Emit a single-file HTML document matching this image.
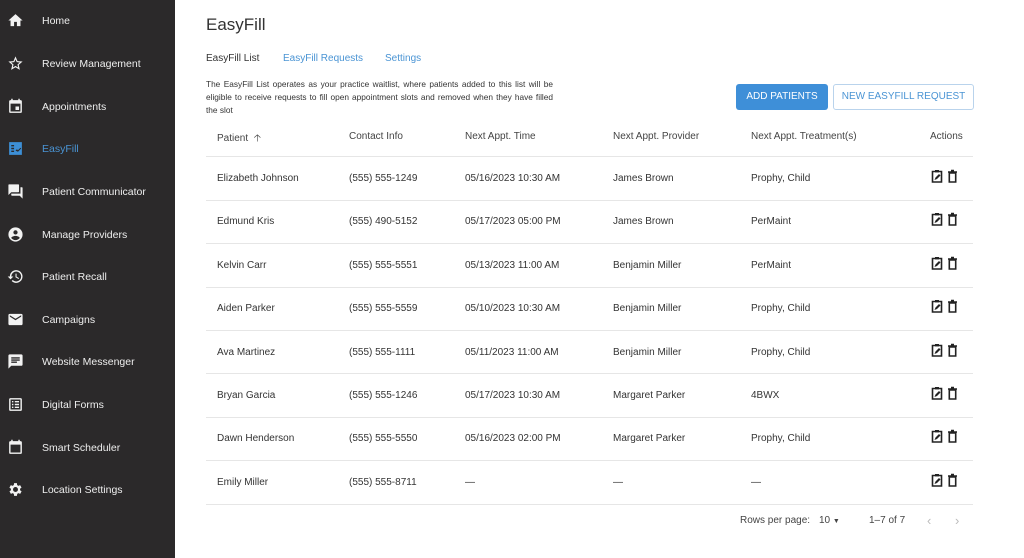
<!DOCTYPE html>
<html><head><style>
*{margin:0;padding:0;box-sizing:border-box}
body{width:1024px;height:558px;background:#fff;font-family:"Liberation Sans",sans-serif;position:relative;overflow:hidden;color:#333}
.sb{position:absolute;left:0;top:0;width:175px;height:558px;background:#2b292a}
.it{position:absolute;left:0;height:20px;width:175px;font-size:10.5px;color:#eee}
.it span{position:absolute;left:42px;top:5px}
.it svg{position:absolute;left:7px;top:2px;width:17px;height:17px;fill:#f2f2f2}
.a{position:absolute;white-space:nowrap}
.hd{font-size:10px;color:#444}
.c{font-size:10px;color:#333}
.ln{position:absolute;left:206px;width:767px;height:1px;background:#e6e6e6}
.ic{position:absolute;left:931px;width:30px;height:14px}
</style></head><body>
<div class="sb">
<div class="it" style="top:10px"><svg viewBox="0 0 24 24"><path d="M10 20v-6h4v6h5v-8h3L12 3 2 12h3v8z"/></svg><span>Home</span></div>
<div class="it" style="top:53px"><svg viewBox="0 0 24 24"><path d="M22 9.24l-7.19-.62L12 2 9.19 8.63 2 9.24l5.46 4.73L5.82 21 12 17.27 18.18 21l-1.63-7.03L22 9.24zM12 15.4l-3.76 2.27 1-4.28-3.32-2.88 4.38-.38L12 6.1l1.71 4.04 4.38.38-3.32 2.88 1 4.28L12 15.4z"/></svg><span>Review Management</span></div>
<div class="it" style="top:96px"><svg viewBox="0 0 24 24"><path d="M17 12h-5v5h5v-5zM16 1v2H8V1H6v2H5a2 2 0 00-2 2v14a2 2 0 002 2h14a2 2 0 002-2V5a2 2 0 00-2-2h-1V1h-2zm3 18H5V8h14v11z"/></svg><span>Appointments</span></div>
<div class="it" style="top:138px"><svg viewBox="0 0 24 24" style="fill:#3d8fd6"><path d="M3 3h18v18H3z"/><path fill="#2b292a" d="M6 7h4v2H6zm0 4h4v2H6zm0 4h4v2H6zm6 0l2-2 1.5 1.5L19 11l1 1-4.5 4.5z"/></svg><span style="color:#4a94d4">EasyFill</span></div>
<div class="it" style="top:181px"><svg viewBox="0 0 24 24"><path d="M21 6h-2v9H6v2c0 .55.45 1 1 1h11l4 4V7c0-.55-.45-1-1-1zm-4 6V3c0-.55-.45-1-1-1H3c-.55 0-1 .45-1 1v14l4-4h10c.55 0 1-.45 1-1z"/></svg><span>Patient Communicator</span></div>
<div class="it" style="top:224px"><svg viewBox="0 0 24 24"><path d="M12 2a10 10 0 100 20 10 10 0 000-20zm0 4a3 3 0 110 6 3 3 0 010-6zm0 14a8 8 0 01-6-3c.03-2 4-3.1 6-3.1s5.970 1.1 6 3.1a8 8 0 01-6 3z"/></svg><span>Manage Providers</span></div>
<div class="it" style="top:266px"><svg viewBox="0 0 24 24"><path d="M13 3a9 9 0 00-9 9H1l4 4 4-4H6a7 7 0 117 7 7 7 0 01-5-2l-1.4 1.4A9 9 0 1013 3zm-1 5v5l4.3 2.5.7-1.2-3.5-2.1V8z"/></svg><span>Patient Recall</span></div>
<div class="it" style="top:309px"><svg viewBox="0 0 24 24"><path d="M20 4H4a2 2 0 00-2 2v12a2 2 0 002 2h16a2 2 0 002-2V6a2 2 0 00-2-2zm0 4l-8 5-8-5V6l8 5 8-5v2z"/></svg><span>Campaigns</span></div>
<div class="it" style="top:351px"><svg viewBox="0 0 24 24"><path d="M20 2H4a2 2 0 00-2 2v18l4-4h14a2 2 0 002-2V4a2 2 0 00-2-2zM6 9h12v2H6zm8 5H6v-2h8zm4-6H6V6h12z"/></svg><span>Website Messenger</span></div>
<div class="it" style="top:394px"><svg viewBox="0 0 24 24"><path d="M19 3H5a2 2 0 00-2 2v14a2 2 0 002 2h14a2 2 0 002-2V5a2 2 0 00-2-2zm0 16H5V5h14zM7 7h2v2H7zm0 4h2v2H7zm0 4h2v2H7zm4-8h6v2h-6zm0 4h6v2h-6zm0 4h6v2h-6z"/></svg><span>Digital Forms</span></div>
<div class="it" style="top:437px"><svg viewBox="0 0 24 24"><path d="M19 3h-1V1h-2v2H8V1H6v2H5a2 2 0 00-2 2v14a2 2 0 002 2h14a2 2 0 002-2V5a2 2 0 00-2-2zm0 16H5V8h14z"/></svg><span>Smart Scheduler</span></div>
<div class="it" style="top:479px"><svg viewBox="0 0 24 24"><path d="M19.4 13a7.5 7.5 0 000-2l2.1-1.6-2-3.5-2.5 1a7 7 0 00-1.7-1L15 3h-4l-.4 2.9a7 7 0 00-1.7 1l-2.5-1-2 3.5L6.6 11a7.5 7.5 0 000 2l-2.1 1.6 2 3.5 2.5-1a7 7 0 001.7 1L11 21h4l.4-2.9a7 7 0 001.7-1l2.5 1 2-3.5zM13 15.5a3.5 3.5 0 110-7 3.5 3.5 0 010 7z" transform="translate(-1 0)"/></svg><span>Location Settings</span></div>
</div>

<div class="a" style="left:206px;top:15px;font-size:17px;color:#333">EasyFill</div>
<div class="a" style="left:206px;top:53px;font-size:10px;color:#333">EasyFill List</div>
<div class="a" style="left:283px;top:53px;font-size:10px;color:#4a94d4">EasyFill Requests</div>
<div class="a" style="left:385px;top:53px;font-size:10px;color:#4a94d4">Settings</div>
<div class="a" style="left:206px;top:78px;font-size:8.3px;color:#333;line-height:13px;width:347px;white-space:normal;text-align:justify">The EasyFill List operates as your practice waitlist, where patients added to this list will be eligible to receive requests to fill open appointment slots and removed when they have filled the slot</div>
<div class="a" style="left:736px;top:84px;width:92px;height:26px;background:#3e8fd8;border-radius:3px;color:#fff;font-size:10px;text-align:center;line-height:26px">ADD PATIENTS</div>
<div class="a" style="left:833px;top:84px;width:141px;height:26px;border:1px solid #b9d3ec;border-radius:3px;color:#4a94d4;font-size:10px;text-align:center;line-height:24px">NEW EASYFILL REQUEST</div>

<div class="a hd" style="left:217px;top:131px">Patient &nbsp;🡡</div>
<div class="a hd" style="left:349px;top:131px">Contact Info</div>
<div class="a hd" style="left:465px;top:131px">Next Appt. Time</div>
<div class="a hd" style="left:613px;top:131px">Next Appt. Provider</div>
<div class="a hd" style="left:751px;top:131px">Next Appt. Treatment(s)</div>
<div class="a hd" style="left:930px;top:131px">Actions</div>

<div class="ln" style="top:156px"></div>
<div class="ln" style="top:200px"></div>
<div class="ln" style="top:243px"></div>
<div class="ln" style="top:287px"></div>
<div class="ln" style="top:330px"></div>
<div class="ln" style="top:373px"></div>
<div class="ln" style="top:417px"></div>
<div class="ln" style="top:460px"></div>
<div class="ln" style="top:504px"></div>

<div id="rows"></div>
<script>
var d=[["Elizabeth Johnson","(555) 555-1249","05/16/2023 10:30 AM","James Brown","Prophy, Child"],
["Edmund Kris","(555) 490-5152","05/17/2023 05:00 PM","James Brown","PerMaint"],
["Kelvin Carr","(555) 555-5551","05/13/2023 11:00 AM","Benjamin Miller","PerMaint"],
["Aiden Parker","(555) 555-5559","05/10/2023 10:30 AM","Benjamin Miller","Prophy, Child"],
["Ava Martinez","(555) 555-1111","05/11/2023 11:00 AM","Benjamin Miller","Prophy, Child"],
["Bryan Garcia","(555) 555-1246","05/17/2023 10:30 AM","Margaret Parker","4BWX"],
["Dawn Henderson","(555) 555-5550","05/16/2023 02:00 PM","Margaret Parker","Prophy, Child"],
["Emily Miller","(555) 555-8711","—","—","—"]];
var xs=[217,349,465,613,751],h="";
var ic='<svg width="30" height="14" viewBox="0 0 30 14"><path d="M1.5 2.5h9v10.5h-9z" fill="none" stroke="#222" stroke-width="1.6"/><rect x="4" y="1" width="4" height="2.4" fill="#222"/><path d="M3.5 11l1-2.5 3.5-3.5 1.5 1.5-3.5 3.5z" fill="#222"/><path d="M17 3h9M20 1.5h3" stroke="#222" stroke-width="1.6"/><path d="M18.3 4h6.4v9h-6.4z" fill="none" stroke="#222" stroke-width="1.6"/></svg>';
d.forEach(function(r,i){var y=Math.round(173+i*43.4);r.forEach(function(t,j){h+='<div class="a c" style="left:'+xs[j]+'px;top:'+y+'px">'+t+'</div>'});h+='<div class="ic" style="top:'+(y-4)+'px">'+ic+'</div>'});
document.getElementById('rows').innerHTML=h;
</script>
<div class="a" style="left:740px;top:515px;font-size:10px;color:#444">Rows per page:</div>
<div class="a" style="left:819px;top:515px;font-size:10px;color:#444">10 <span style="font-size:7px">▼</span></div>
<div class="a" style="left:869px;top:515px;font-size:10px;color:#444">1–7 of 7</div>
<div class="a" style="left:927px;top:513px;font-size:13px;color:#bbb">‹</div>
<div class="a" style="left:955px;top:513px;font-size:13px;color:#bbb">›</div>
</body></html>
